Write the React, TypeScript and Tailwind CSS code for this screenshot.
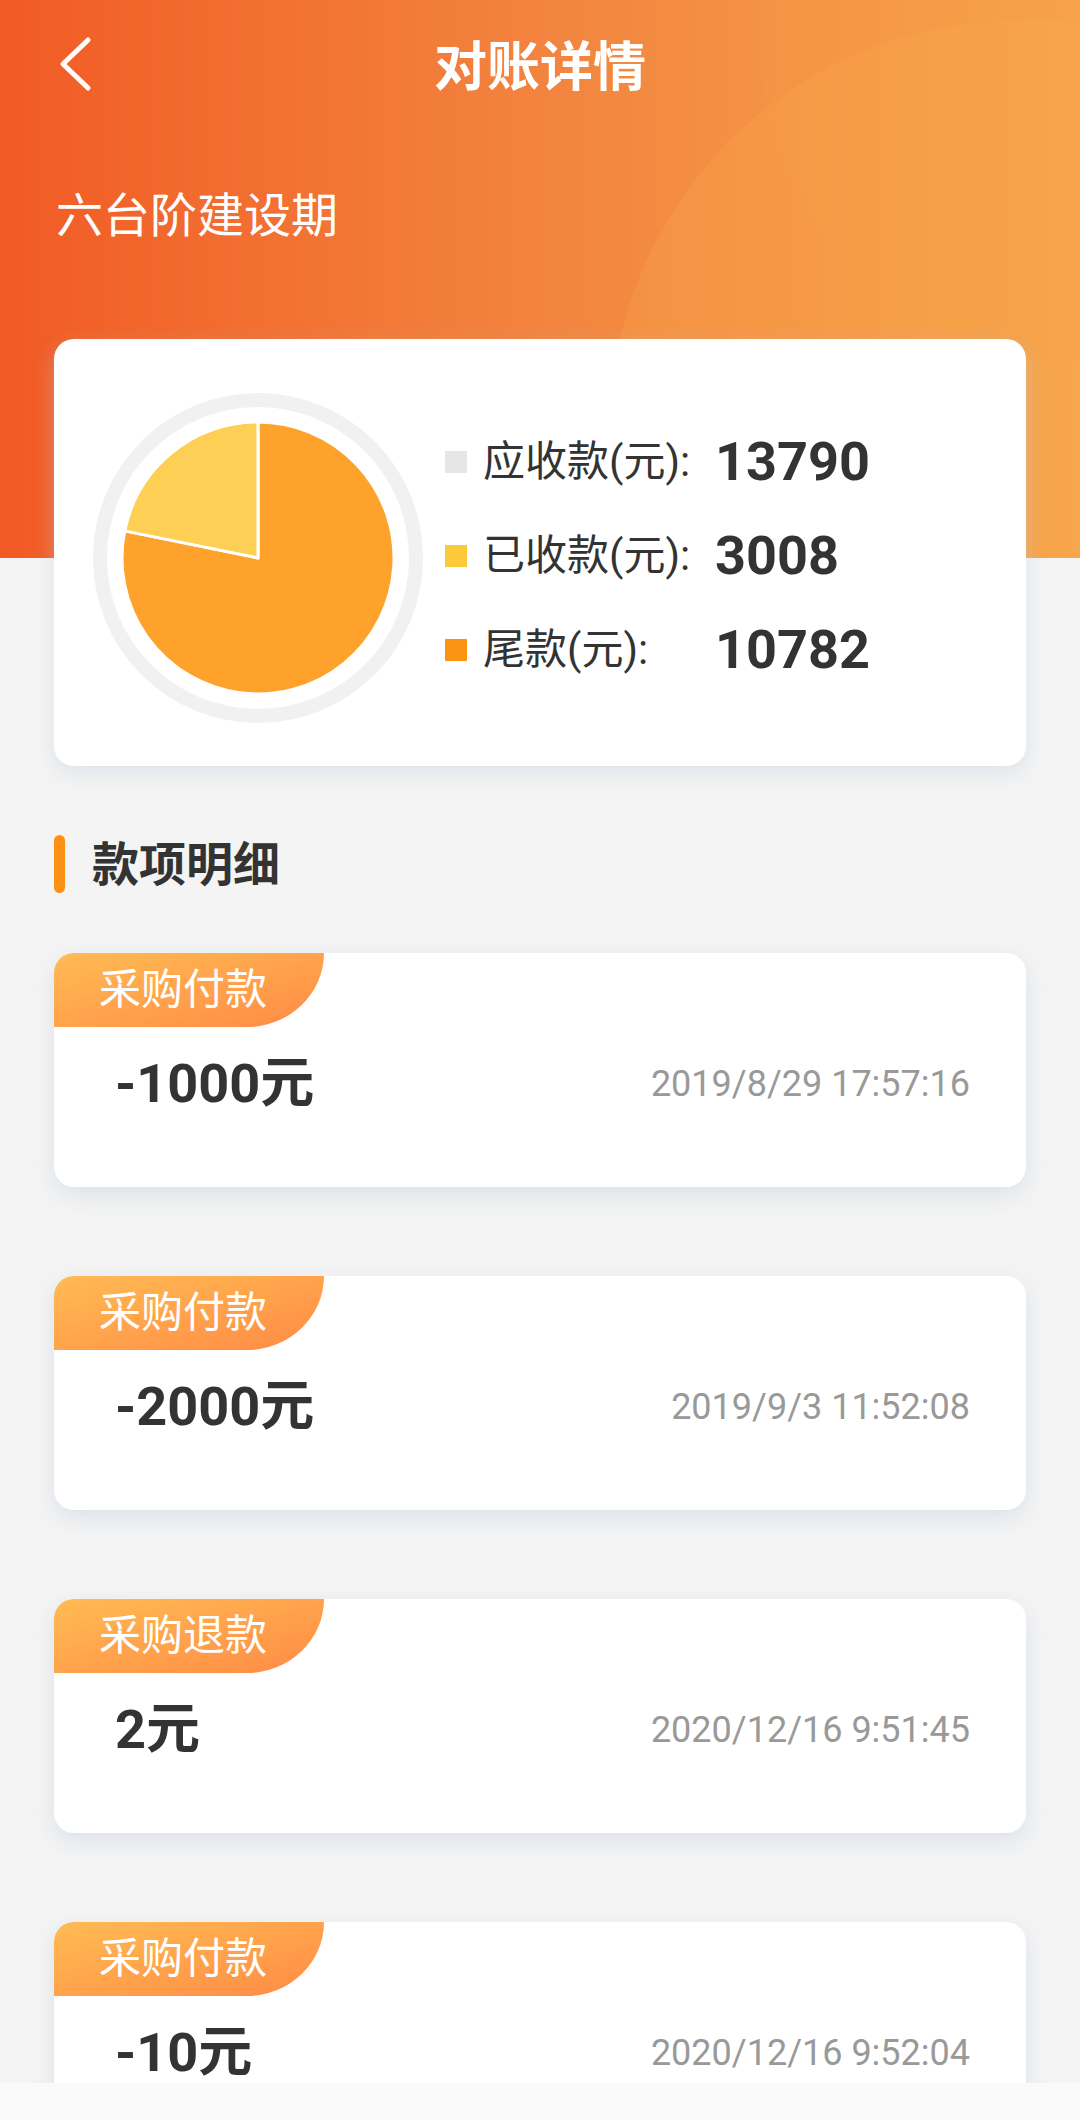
type Record = {
  tag: string;
  amount: string;
  time: string;
};

const records: Record[] = [
  { tag: "采购付款", amount: "-1000元", time: "2019/8/29 17:57:16" },
  { tag: "采购付款", amount: "-2000元", time: "2019/9/3 11:52:08" },
  { tag: "采购退款", amount: "2元", time: "2020/12/16 9:51:45" },
  { tag: "采购付款", amount: "-10元", time: "2020/12/16 9:52:04" },
];

const legend = [
  { label: "应收款(元):", value: "13790", color: "bg-[#e6e6e6]" },
  { label: "已收款(元):", value: "3008", color: "bg-[#fcc93a]" },
  { label: "尾款(元):", value: "10782", color: "bg-[#fb9413]" },
];

function Pie() {
  // 已收款 3008 / 13790 ≈ 78.5°
  return (
    <svg width="330" height="330" viewBox="0 0 330 330">
      <circle cx="165" cy="165" r="165" fill="#f1f1f1" />
      <circle cx="165" cy="165" r="151" fill="#ffffff" />
      <path
        d="M165 165 L31.73 137.89 A136 136 0 1 0 165 29 Z"
        fill="#fea22b"
        stroke="#ffffff"
        strokeWidth="3"
        strokeLinejoin="round"
      />
      <path
        d="M165 165 L165 29 A136 136 0 0 0 31.73 137.89 Z"
        fill="#fdcf55"
        stroke="#ffffff"
        strokeWidth="3"
        strokeLinejoin="round"
      />
    </svg>
  );
}

function RecordCard({ item }: { item: Record }) {
  return (
    <div className="h-[234px] rounded-[20px] bg-white shadow-[0_8px_22px_rgba(190,203,222,0.45)]">
      <div className="flex h-[74px] w-[270px] items-center rounded-tl-[20px] rounded-br-[77px_74px] bg-gradient-to-br from-[#ffbb53] to-[#ff8a45] pl-[45px] text-[42px] leading-none text-white">
        {item.tag}
      </div>
      <div className="mt-[26px] flex items-center justify-between pl-[61px] pr-[56px]">
        <span className="text-[54px] font-bold leading-[62px] text-[#333333]">
          {item.amount}
        </span>
        <span className="text-[36px] leading-[62px] text-[#999999]">
          {item.time}
        </span>
      </div>
    </div>
  );
}

export default function App() {
  return (
    <div className="relative min-h-[2120px] overflow-hidden bg-[#f4f4f4] font-['Roboto','Noto_Sans_CJK_SC',sans-serif]">
      {/* orange header background */}
      <div className="absolute left-0 top-0 h-[558px] w-full overflow-hidden bg-gradient-to-r from-[#f15a24] via-[#f2843f] to-[#f7a34a]">
        <div className="absolute left-[610px] top-[20px] h-[820px] w-[820px] rounded-full bg-[#fbb44e]/20" />
        <div className="absolute left-[760px] top-[-280px] h-[640px] w-[640px] rounded-full bg-[#f9a04a]/15" />
      </div>

      <div className="relative">
        <div className="relative flex h-[136px] items-center justify-center">
          <svg
            className="absolute left-[54px] top-[36px]"
            width="42"
            height="56"
            viewBox="0 0 42 56"
            fill="none"
          >
            <path
              d="M34 4 L9 28 L34 52"
              stroke="#ffffff"
              strokeWidth="5"
              strokeLinecap="round"
              strokeLinejoin="round"
            />
          </svg>
          <h1 className="text-[53px] font-bold leading-none text-white">对账详情</h1>
        </div>

        <div className="px-[56px] pt-[52px] text-[47px] leading-[56px] text-white">
          六台阶建设期
        </div>

        <div className="mx-[54px] mt-[95px] flex h-[427px] items-center rounded-[20px] bg-white pl-[39px] shadow-[0_8px_20px_rgba(190,203,222,0.4)]">
          <div className="pt-[10px]">
            <Pie />
          </div>
          <div className="ml-[22px] flex flex-col gap-[32px] pt-[6px]">
            {legend.map((row) => (
              <div key={row.label} className="flex h-[62px] items-center">
                <span className={`h-[22px] w-[22px] ${row.color}`} />
                <span className="ml-[16px] w-[232px] text-[42px] leading-none text-[#333333]">
                  {row.label}
                </span>
                <span className="text-[54px] font-bold leading-none text-[#333333]">
                  {row.value}
                </span>
              </div>
            ))}
          </div>
        </div>

        <div className="mx-[54px] mt-[69px] flex h-[58px] items-center">
          <span className="h-[58px] w-[11px] rounded-full bg-[#fb9012]" />
          <span className="ml-[27px] text-[47px] font-bold leading-none text-[#333333]">
            款项明细
          </span>
        </div>

        <div className="mx-[54px] mt-[60px] flex flex-col gap-[89px] pb-[120px]">
          {records.map((item, i) => (
            <RecordCard key={i} item={item} />
          ))}
        </div>
      </div>

      <div className="fixed bottom-0 left-0 h-[37px] w-full bg-[#fafafa]" />
    </div>
  );
}
